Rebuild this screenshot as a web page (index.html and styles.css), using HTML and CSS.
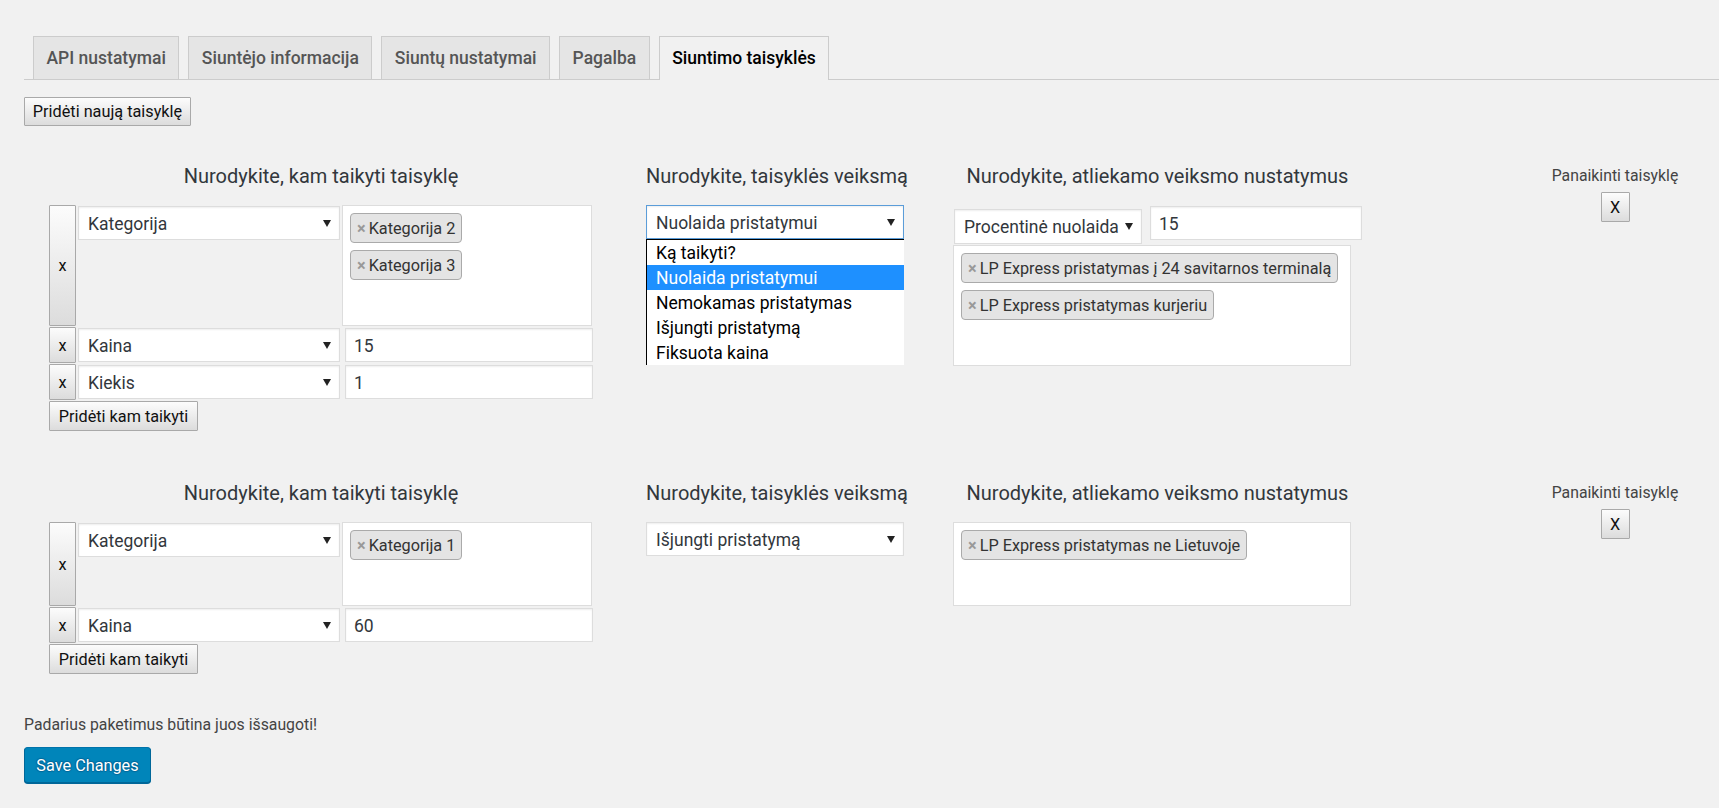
FILE: index.html
```html
<!DOCTYPE html>
<html lang="lt">
<head>
<meta charset="utf-8">
<title>Siuntimo taisyklės</title>
<link rel="stylesheet" href="styles.css">
</head>
<body>
<div class="wrap">
  <nav class="tabs">
    <a class="tab">API nustatymai</a>
    <a class="tab">Siuntėjo informacija</a>
    <a class="tab">Siuntų nustatymai</a>
    <a class="tab">Pagalba</a>
    <a class="tab tab-active">Siuntimo taisyklės</a>
  </nav>

  <button class="btn btn-add">Pridėti naują taisyklę</button>

  <section class="rule rule-first">
    <div class="col col-cond">
      <h3 class="col-title">Nurodykite, kam taikyti taisyklę</h3>
      <div class="cond-row">
        <button class="btn btn-x">x</button>
        <div class="fselect fselect-cond"><span>Kategorija</span><i class="caret"></i></div>
        <div class="multi multi-cond">
          <span class="tag"><b class="tag-x">×</b>Kategorija 2</span>
          <span class="tag"><b class="tag-x">×</b>Kategorija 3</span>
        </div>
      </div>
      <div class="cond-row cond-row-s">
        <button class="btn btn-x">x</button>
        <div class="fselect fselect-cond"><span>Kaina</span><i class="caret"></i></div>
        <div class="finput finput-cond">15</div>
      </div>
      <div class="cond-row cond-row-s">
        <button class="btn btn-x">x</button>
        <div class="fselect fselect-cond"><span>Kiekis</span><i class="caret"></i></div>
        <div class="finput finput-cond">1</div>
      </div>
      <button class="btn btn-addcond">Pridėti kam taikyti</button>
    </div>

    <div class="col col-action">
      <h3 class="col-title">Nurodykite, taisyklės veiksmą</h3>
      <div class="dd">
        <div class="fselect fselect-action is-focus"><span>Nuolaida pristatymui</span><i class="caret"></i></div>
        <ul class="dd-list">
          <li>Ką taikyti?</li>
          <li class="is-hl">Nuolaida pristatymui</li>
          <li>Nemokamas pristatymas</li>
          <li>Išjungti pristatymą</li>
          <li>Fiksuota kaina</li>
        </ul>
      </div>
    </div>

    <div class="col col-set">
      <h3 class="col-title">Nurodykite, atliekamo veiksmo nustatymus</h3>
      <div class="set-top">
        <div class="fselect fselect-set"><span>Procentinė nuolaida</span><i class="caret"></i></div>
        <div class="finput finput-set">15</div>
      </div>
      <div class="multi multi-set multi-set-gap">
        <span class="tag"><b class="tag-x">×</b>LP Express pristatymas į 24 savitarnos terminalą</span>
        <span class="tag"><b class="tag-x">×</b>LP Express pristatymas kurjeriu</span>
      </div>
    </div>

    <div class="col col-del">
      <div class="del-label">Panaikinti taisyklę</div>
      <button class="btn btn-del">X</button>
    </div>
  </section>

  <section class="rule rule-next">
    <div class="col col-cond">
      <h3 class="col-title">Nurodykite, kam taikyti taisyklę</h3>
      <div class="cond-row">
        <button class="btn btn-x">x</button>
        <div class="fselect fselect-cond"><span>Kategorija</span><i class="caret"></i></div>
        <div class="multi multi-cond">
          <span class="tag"><b class="tag-x">×</b>Kategorija 1</span>
        </div>
      </div>
      <div class="cond-row cond-row-s">
        <button class="btn btn-x">x</button>
        <div class="fselect fselect-cond"><span>Kaina</span><i class="caret"></i></div>
        <div class="finput finput-cond">60</div>
      </div>
      <button class="btn btn-addcond">Pridėti kam taikyti</button>
    </div>

    <div class="col col-action">
      <h3 class="col-title">Nurodykite, taisyklės veiksmą</h3>
      <div class="dd">
        <div class="fselect fselect-action"><span>Išjungti pristatymą</span><i class="caret"></i></div>
      </div>
    </div>

    <div class="col col-set">
      <h3 class="col-title">Nurodykite, atliekamo veiksmo nustatymus</h3>
      <div class="multi multi-set">
        <span class="tag"><b class="tag-x">×</b>LP Express pristatymas ne Lietuvoje</span>
      </div>
    </div>

    <div class="col col-del">
      <div class="del-label">Panaikinti taisyklę</div>
      <button class="btn btn-del">X</button>
    </div>
  </section>

  <p class="note">Padarius paketimus būtina juos išsaugoti!</p>
  <button class="btn-primary">Save Changes</button>
</div>
</body>
</html>
```

FILE: styles.css
```css
* { box-sizing: border-box; }
html, body { margin: 0; }
body {
  background: #f1f1f1;
  font-family: Roboto, "Segoe UI", "Open Sans", sans-serif;
  font-size: 16.25px;
  color: #444;
  min-height: 808px;
}
.wrap { padding: 36px 0 0 24px; }

/* tabs */
.tabs {
  display: flex;
  align-items: flex-start;
  gap: 9px;
  padding-left: 9px;
  height: 44px;
  border-bottom: 1px solid #ccc;
}
.tab {
  display: block;
  height: 43px;
  padding: 0 12.5px;
  line-height: 42px;
  border: 1px solid #ccc;
  border-bottom: 0;
  background: #e5e5e5;
  color: #555;
  font-size: 17.5px;
  font-weight: 500;
  text-decoration: none;
  white-space: nowrap;
}
.tab-active {
  height: 44px;
  background: #f1f1f1;
  color: #000;
}

/* generic native-like buttons */
.btn {
  font-family: inherit;
  font-size: 16.25px;
  color: #111;
  background: linear-gradient(#fcfcfc, #dcdcdc);
  border: 1px solid #a9a9a9;
  border-radius: 1px;
  padding: 0;
  cursor: pointer;
  white-space: nowrap;
}
.btn-add {
  display: block;
  margin-top: 17px;
  width: 167px;
  height: 29px;
}

/* rules */
.rule {
  display: flex;
  align-items: flex-start;
  padding-left: 25px;
}
.rule-first { margin-top: 38px; }
.rule-next { margin-top: 50px; }

.col-title {
  margin: 0 0 17px;
  font-size: 20px;
  line-height: 24px;
  font-weight: 400;
  color: #32373c;
  text-align: center;
  white-space: nowrap;
}

.col-cond { width: 544px; }
.col-action { width: 258px; margin-left: 53px; }
.col-set { width: 409px; margin-left: 49px; }
.col-del { width: 200px; margin-left: 153px; text-align: center; }

.cond-row {
  display: flex;
  align-items: flex-start;
  margin-bottom: 1px;
}
.cond-row-s { height: 36px; }
.btn-x {
  align-self: stretch;
  width: 27px;
  margin-right: 2px;
}

.fselect {
  position: relative;
  height: 34px;
  background: #fff;
  border: 1px solid #ddd;
  box-shadow: inset 0 1px 2px rgba(0, 0, 0, .07);
  font-size: 17.5px;
  line-height: 35px;
  color: #32373c;
  padding: 0 24px 0 9px;
  white-space: nowrap;
}
.caret {
  position: absolute;
  right: 8px;
  top: 13px;
  width: 0;
  height: 0;
  border-left: 4px solid transparent;
  border-right: 4px solid transparent;
  border-top: 7px solid #222;
}
.fselect-cond { width: 262px; margin-top: 1px; }
.fselect-action { width: 258px; margin-top: 1px; }
.fselect-set { width: 188px; height: 35px; margin-left: 1px; margin-top: 4px; }
.is-focus { border-color: #5b9dd9; }

.finput {
  height: 34px;
  background: #fff;
  border: 1px solid #ddd;
  box-shadow: inset 0 1px 2px rgba(0, 0, 0, .07);
  font-size: 17.5px;
  line-height: 35px;
  color: #32373c;
  padding: 0 8px;
}
.finput-cond { width: 248px; margin-left: 5px; margin-top: 1px; }
.finput-set { width: 212px; margin-left: 8px; margin-top: 1px; }

.multi {
  display: flex;
  flex-direction: column;
  align-items: flex-start;
  background: #fff;
  border: 1px solid #ddd;
  padding: 0 7px 45px;
}
.multi-cond { width: 250px; margin-left: 2px; }
.multi-set { width: 398px; }
.multi-set-gap { margin-top: 1px; }
.set-top { display: flex; align-items: flex-start; }

.tag {
  display: block;
  margin-top: 7px;
  height: 30px;
  line-height: 30px;
  padding: 0 6px;
  background: #e4e4e4;
  border: 1px solid #aaa;
  border-radius: 4px;
  color: #333;
  font-size: 16.25px;
  white-space: nowrap;
}
.tag-x {
  color: #999;
  font-weight: 700;
  margin-right: 3px;
}

.btn-addcond {
  display: block;
  width: 149px;
  height: 30px;
}

/* open dropdown */
.dd { position: relative; }
.dd-list {
  position: absolute;
  left: 0;
  top: 100%;
  width: 258px;
  margin: 0;
  padding: 0;
  list-style: none;
  background: #fff;
  border-left: 1px solid #000;
  border-top: 1px solid #000;
  z-index: 2;
}
.dd-list li {
  height: 25px;
  line-height: 27px;
  padding-left: 9px;
  font-size: 17.5px;
  color: #000;
  white-space: nowrap;
}
.dd-list li.is-hl { background: #1e90ff; color: #fff; }

/* delete column */
.del-label {
  padding-top: 2px;
  line-height: 20px;
  font-size: 15.8px;
  color: #444;
  white-space: nowrap;
}
.btn-del {
  display: block;
  margin: 6px auto 0;
  width: 29px;
  height: 30px;
}

/* footer */
.note {
  margin: 41px 0 0;
  line-height: 20px;
  font-size: 15.8px;
  color: #444;
}
.btn-primary {
  display: block;
  margin-top: 12px;
  width: 127px;
  height: 36px;
  padding: 0;
  font-family: inherit;
  font-size: 16.25px;
  color: #fff;
  background: #0085ba;
  border: 1px solid;
  border-color: #0073aa #006799 #006799;
  border-radius: 3.75px;
  box-shadow: 0 1px 0 #006799;
  text-shadow: 0 -1px 1px #006799, 1px 0 1px #006799, 0 1px 1px #006799, -1px 0 1px #006799;
  cursor: pointer;
}
```
